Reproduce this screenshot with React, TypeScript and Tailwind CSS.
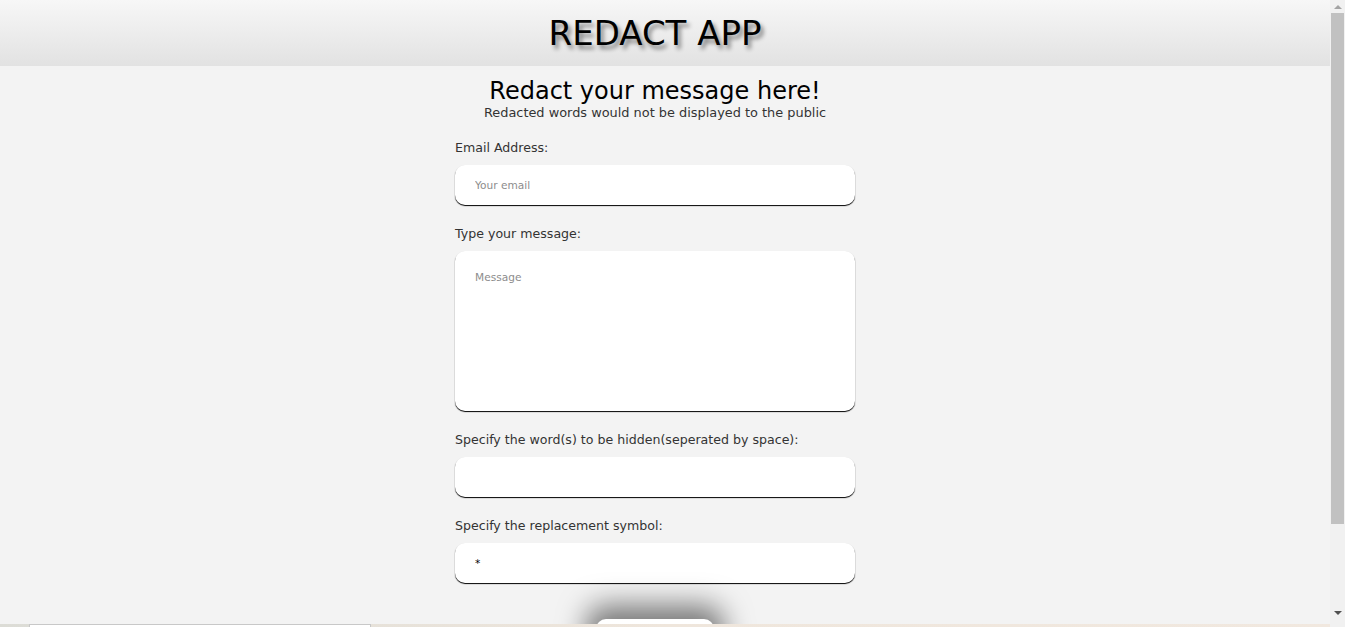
import React from 'react'

const font = { fontFamily: '"DejaVu Sans", "Liberation Sans", sans-serif' }

function Field({
  label,
  placeholder,
  value,
  tall,
}: {
  label: string
  placeholder?: string
  value?: string
  tall?: boolean
}) {
  return (
    <div className="flex flex-col">
      <label className="mb-[9px] pt-[1px] text-[12.6px] leading-[16px] text-[#333]">{label}</label>
      {tall ? (
        <textarea
          placeholder={placeholder}
          className="h-[160px] w-full resize-none rounded-[10px] bg-white px-[20px] py-[19px] text-[10.6px] leading-[14px] text-black shadow-[0_1px_1px_#000] outline-none placeholder:text-[#8d8d8d]"
        />
      ) : (
        <input
          placeholder={placeholder}
          defaultValue={value}
          className="h-[40px] w-full rounded-[10px] bg-white px-[20px] text-[10.6px] text-black shadow-[0_1px_1px_#000] outline-none placeholder:text-[#8d8d8d]"
        />
      )}
    </div>
  )
}

function Scrollbar() {
  return (
    <div className="flex w-[15px] shrink-0 flex-col items-center bg-[#f1f1f1]">
      <div className="flex h-[13px] items-center justify-center">
        <div className="h-0 w-0 border-x-[4px] border-b-[4px] border-x-transparent border-b-[#a3a3a3]" />
      </div>
      <div className="h-[511px] w-[13px] bg-[#c1c1c1]" />
      <div className="flex-1" />
      <div className="flex h-[19px] items-start justify-center pt-[3px]">
        <div className="h-0 w-0 border-x-[4px] border-t-[4px] border-x-transparent border-t-[#505050]" />
      </div>
    </div>
  )
}

export default function App() {
  return (
    <div style={font} className="flex h-[627px] overflow-hidden bg-[#f3f3f3]">
      <div className="flex w-[1330px] flex-col overflow-hidden">
        <header className="flex h-[66px] w-full shrink-0 items-center justify-center bg-gradient-to-b from-[#f7f7f7] to-[#e2e2e2] pr-[20px]">
          <h1 className="text-[34px] leading-[40px] text-black [text-shadow:3px_4px_4px_rgba(0,0,0,0.45)]">
            REDACT APP
          </h1>
        </header>
        <main className="flex w-[1310px] shrink-0 justify-center">
          <div className="flex w-[400px] flex-col">
            <div className="mt-[11px] text-center">
              <h2 className="text-[24px] leading-[28px] text-black">Redact your message here!</h2>
              <p className="text-[12.9px] leading-[16px] text-[#333]">
                Redacted words would not be displayed to the public
              </p>
            </div>
            <form className="mt-[18px] flex flex-col gap-[20px]">
              <Field label="Email Address:" placeholder="Your email" />
              <Field label="Type your message:" placeholder="Message" tall />
              <Field label="Specify the word(s) to be hidden(seperated by space):" />
              <Field label="Specify the replacement symbol:" value="*" />
            </form>
            <div className="mt-[36px] flex h-[5px] justify-center">
              <button className="h-[40px] w-[118px] shrink-0 rounded-[10px] bg-white text-[13px] shadow-[0_-4px_28px_10px_rgba(0,0,0,0.5)]">
                Redact
              </button>
            </div>
          </div>
        </main>
        <section className="flex h-[40px] shrink-0 bg-gradient-to-r from-[#dcdcd6] via-[#efe6dc] to-[#f1e8df] pl-[29px]">
          <div className="h-[40px] w-[342px] border border-[#c8c8c8] bg-white" />
        </section>
      </div>
      <Scrollbar />
    </div>
  )
}
